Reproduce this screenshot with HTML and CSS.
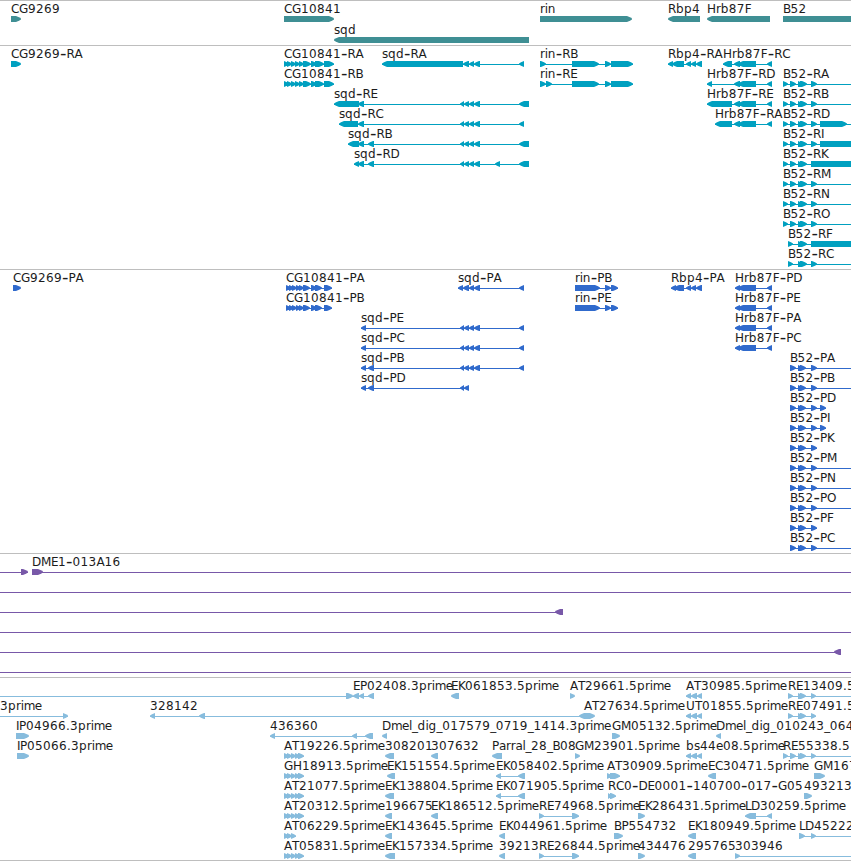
FILE: index.html
```html
<!DOCTYPE html>
<html lang="en">
<head>
<meta charset="utf-8">
<title>Genome browser</title>
<link rel="stylesheet" href="styles.css">
</head>
<body>
<main class="browser">
  <section class="track genes"><svg class="lane" id="genes"></svg></section>
  <section class="track transcripts"><svg class="lane" id="transcripts"></svg></section>
  <section class="track proteins"><svg class="lane" id="proteins"></svg></section>
  <section class="track bacs"><svg class="lane" id="bacs"></svg></section>
  <section class="track ests"><svg class="lane" id="ests"></svg></section>
</main>
<script src="tracks.js"></script>
</body>
</html>
```
FILE: styles.css
```css
body {
  margin: 0;
  background: #fff;
  overflow: hidden;
}
.browser {
  display: flex;
  flex-direction: column;
  width: 851px;
  height: 860px;
  border-bottom: 1px solid #bebebe;
}
.track {
  box-sizing: border-box;
  border-top: 1px solid #bebebe;
  overflow: hidden;
}
.genes { height: 45px; color: #3f8f94; }
.transcripts { height: 224px; color: #00a0c0; }
.proteins { height: 284px; color: #306acc; }
.bacs { height: 124px; color: #7858a8; }
.ests { height: 183px; color: #87bcdd; }
.lane {
  display: block;
  width: 100%;
  height: 100%;
}
.feature { fill: currentColor; }
.label {
  fill: #1c1c1c;
  font-family: "DejaVu Sans", sans-serif;
  font-size: 12px;
}
.dash { font-size: 18px; }
```
FILE: tracks.js
```js
// Each feature: [row, label, exons, optional line end, optional line start].
// Exons are "<x1-x2" (reverse strand), ">x1-x2" (forward) or "=x1-x2" (runs off the view).
const EDGE = 851;
const SQD = '<460-464 <464-469 <469-474 <474-480 ';
const CG_R = '>284-289 >287-292 >291-296 >295-300 >299-304 >303-311 >311-317 >315-324 >324-334';
const CG_P = '>286-291 >289-294 >292-297 >296-301 >299-304 >303-310 >311-317 >315-322 >324-332';
const HRB = '<734-740 <738-756 <767-772';
const B52 = '>783-788 >790-796 >798-803 >800-807 ';
const B52P = '>790-796 >798-803 >800-806 ';
const AT = '>284-289 >287-292 >291-296 >295-300 >298-304';
const TRIO = '<686-691 <691-697 <697-702';

const tracks = {
  genes: { pitch: 21, items: [
    [0, 'CG9269', '>11-21'], [0, 'CG10841', '>284-334'], [0, 'rin', '>540-632'],
    [0, 'Rbp4', '<668-700'], [0, 'Hrb87F', '<707-770'], [0, 'B52', '=783-851'],
    [1, 'sqd', '<334-529']
  ]},
  transcripts: { pitch: 20, items: [
    [0, 'CG9269-RA', '>11-21'], [0, 'CG10841-RA', CG_R], [1, 'CG10841-RB', CG_R],
    [0, 'sqd-RA', '<382-463 <463-469 <469-474 <474-480 <519-524'],
    [2, 'sqd-RE', '<334-359 <358-364 ' + SQD + '<519-529'],
    [3, 'sqd-RC', '<339-358 <358-364 ' + SQD + '<519-524'],
    [4, 'sqd-RB', '<348-359 <358-364 <368-374 ' + SQD + '<519-529'],
    [5, 'sqd-RD', '<354-359 <358-364 <368-374 ' + SQD + '<495-500 <519-529'],
    [0, 'rin-RB', '>540-546 >572-599 >605-611 >611-633'],
    [1, 'rin-RE', '>540-546 >546-552 >572-599 >605-611 >611-633'],
    [0, 'Rbp4-RA', '<668-673 <672-684 <686-691 <691-696 <696-702'],
    [0, 'Hrb87F-RC', '<723-732 ' + HRB], [1, 'Hrb87F-RD', '<707-712 ' + HRB],
    [2, 'Hrb87F-RE', '<707-732 ' + HRB], [3, 'Hrb87F-RA', '<715-732 ' + HRB],
    [1, 'B52-RA', B52 + '>811-817', EDGE], [2, 'B52-RB', B52 + '>811-817', EDGE],
    [3, 'B52-RD', B52 + '>811-817 >820-847', EDGE],
    [4, 'B52-RI', B52 + '>811-817 =820-851'], [5, 'B52-RK', B52 + '=811-851'],
    [6, 'B52-RM', B52 + '>811-817', EDGE], [7, 'B52-RN', B52 + '>811-817', EDGE],
    [8, 'B52-RO', B52 + '>811-817', EDGE],
    [9, 'B52-RF', '>788-793 >798-803 >800-807 =811-851'],
    [10, 'B52-RC', '>788-793 >798-803 >800-807 >811-817', EDGE]
  ]},
  proteins: { pitch: 20, items: [
    [0, 'CG9269-PA', '>13-21'], [0, 'CG10841-PA', CG_P], [1, 'CG10841-PB', CG_P],
    [0, 'sqd-PA', '<458-463 <463-469 <469-474 <474-480 <519-524'],
    [2, 'sqd-PE', '<361-366 ' + SQD + '<519-524'],
    [3, 'sqd-PC', '<361-366 ' + SQD + '<519-524'],
    [4, 'sqd-PB', '<361-366 <368-374 ' + SQD + '<519-524'],
    [5, 'sqd-PD', '<361-366 <368-374 <460-464 <464-469'],
    [0, 'rin-PB', '>575-600 >605-611 >611-618'], [1, 'rin-PE', '>575-600 >605-611 >611-618'],
    [0, 'Rbp4-PA', '<671-676 <674-684 <686-691 <691-696 <696-702'],
    [0, 'Hrb87F-PD', '<735-740 <738-756 <767-772'], [1, 'Hrb87F-PE', '<735-740 <738-756 <767-772'],
    [2, 'Hrb87F-PA', '<735-740 <738-756 <767-772'], [3, 'Hrb87F-PC', '<735-740 <738-756 <767-772'],
    [4, 'B52-PA', B52P + '>811-817', EDGE], [5, 'B52-PB', B52P + '>811-817', EDGE],
    [6, 'B52-PD', B52P + '>811-817 >820-826'], [7, 'B52-PI', B52P + '>811-817 >820-826'],
    [8, 'B52-PK', B52P + '>811-817'],
    [9, 'B52-PM', B52P + '>811-817', EDGE], [10, 'B52-PN', B52P + '>811-817', EDGE],
    [11, 'B52-PO', B52P + '>811-817', EDGE], [12, 'B52-PF', B52P + '>811-817'],
    [13, 'B52-PC', B52P + '>811-817', EDGE]
  ]},
  bacs: { pitch: 20, items: [
    [0, '', '>21-28', 28, 0], [0, 'DME1-013A16', '>32-43', EDGE],
    [1, '', '', EDGE, 0], [2, '', '<555-563', 563, 0], [3, '', '', EDGE, 0],
    [4, '', '<834-841', 841, 0], [5, '', '', EDGE, 0]
  ]},
  ests: { pitch: 20, items: [
    [0, '', '>346-353', 353, 0], [0, 'EP02408.3prime', '<353-359 <359-364 <368-374', 374, 353],
    [0, 'EK061853.5prime', '<451-459'], [0, 'AT29661.5prime', '>570-575'],
    [0, 'AT30985.5prime', TRIO], [0, 'RE13409.5', '>788-793 >798-803 >800-806 >811-816', EDGE],
    [1, '3prime', '>63-68', 68, 0], [1, '328142', '<150-155 <199-205 <579-590'],
    [1, 'AT27634.5prime', '>584-595'], [1, 'UT01855.5prime', TRIO],
    [1, 'RE07491.5', '>788-793 >798-803 >800-806 >811-816'],
    [2, 'IP04966.3prime', '>16-29'], [2, '436360', '<270-275 <352-357 <365-373'],
    [2, 'Dmel_dig_017579_0719_1414.3prime', '<382-387'], [2, 'GM05132.5prime', '>612-620'],
    [2, 'Dmel_dig_010243_064', '<716-721'],
    [3, 'IP05066.3prime', '>17-29'], [3, 'AT19226.5prime', AT], [3, '308201', '<385-394'],
    [3, '307632', '<431-438'], [3, 'Parral_28_B08', '<492-502'], [3, 'GM23901.5prime', '>575-580'],
    [3, 'bs44e08.5prime', TRIO],
    [3, 'RE55338.5', '>783-788 >790-796 >798-803 >800-806 >811-816', EDGE],
    [4, 'GH18913.5prime', AT], [4, 'EK151554.5prime', '<387-395'],
    [4, 'EK058402.5prime', '<496-501 <518-525'], [4, 'AT30909.5prime', '>607-612 >610-620'],
    [4, 'EC30471.5prime', '<708-716'], [4, 'GM167', '>814-825'],
    [5, 'AT21077.5prime', AT], [5, 'EK138804.5prime', '<385-394'],
    [5, 'EK071905.5prime', '<496-501 <518-525'],
    [5, 'RC0-DE0001-140700-017-G05', '>608-612 >610-616'], [5, '493213', '>804-812'],
    [6, 'AT20312.5prime', AT], [6, '196675', '<385-392'], [6, 'EK186512.5prime', '<431-438'],
    [6, 'RE74968.5prime', '>539-544 >572-579'], [6, 'EK286431.5prime', '>638-645'],
    [6, 'LD30259.5prime', '<745-756 <767-772'],
    [7, 'AT06229.5prime', '>284-289 >287-292 >291-296'], [7, 'EK143645.5prime', '<385-392'],
    [7, 'EK044961.5prime', '<499-505'], [7, 'BP554732', '>614-623'],
    [7, 'EK180949.5prime', '<688-696'], [7, 'LD45222', '>799-805 >811-816', EDGE],
    [8, 'AT05831.5prime', AT], [8, 'EK157334.5prime', '<385-395'], [8, '39213', '<499-505'],
    [8, 'RE26844.5prime', '>539-544 >572-579'], [8, '434476', '>638-645'],
    [8, '295765', '<688-696'], [8, '303946', '>735-740', EDGE]
  ]}
};

// Glyph advances for the labels; digits and most capitals are 8px.
const advance = {
  G: 9, H: 9, D: 9, M: 10, O: 9, N: 9, U: 9, B: 7.5, E: 7, F: 7, K: 7, L: 6, P: 7, T: 7, I: 3,
  '-': 6.5, '.': 4, _: 5.6, a: 7, e: 7, i: 3, l: 3, m: 11, r: 4.7, s: 6
};

function node(name, attrs, parent) {
  const el = document.createElementNS('http://www.w3.org/2000/svg', name);
  for (const key in attrs) el.setAttribute(key, attrs[key]);
  parent.appendChild(el);
  return el;
}

// Blunt arrowhead: the sides step in before they meet at the tip.
function arrow(dir, a, b, y) {
  if (dir === '=') return `M${a} ${y}H${b}V${y + 6}H${a}Z`;
  const tip = Math.min(5, b - a);
  const s = dir === '>' ? 1 : -1;
  const head = s > 0 ? b : a, tail = s > 0 ? a : b;
  return `M${tail} ${y}H${head - s * tip}L${head - s * 2} ${y + 1.3}L${head} ${y + 2.4}` +
    `V${y + 3.6}L${head - s * 2} ${y + 4.7}L${head - s * tip} ${y + 6}H${tail}Z`;
}

function drawLabel(svg, label, x, y) {
  const text = node('text', { class: 'label' }, svg);
  for (const run of label.split(/(-)/)) {
    const dash = run === '-';
    const xs = [...run].map(c => { const at = x; x += advance[c] ?? 8; return at; });
    node('tspan', {
      class: dash ? 'dash' : 'run',
      x: xs.join(' '),
      y: dash ? y + 1 : y
    }, text).textContent = run;
  }
}

for (const id in tracks) {
  const svg = document.getElementById(id);
  for (const [row, label, exons, to, from] of tracks[id].items) {
    const y = 15 + row * tracks[id].pitch;
    const parts = exons ? exons.trim().split(/\s+/).map(s => [s[0], ...s.slice(1).split('-').map(Number)]) : [];
    const start = from ?? parts[0][1];
    const end = to ?? parts[parts.length - 1][2];
    const d = parts.map(p => arrow(p[0], p[1], p[2], y)).join('');
    if (parts.length !== 1 || to !== undefined) {
      node('rect', { class: 'feature', x: start, y: y + 3, width: end - start, height: 1 }, svg);
    }
    if (d) node('path', { class: 'feature', d }, svg);
    if (label) drawLabel(svg, label, start, y - 3);
  }
}
```
